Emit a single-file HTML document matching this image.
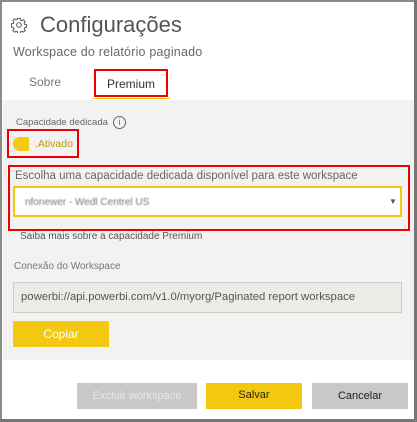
<!DOCTYPE html>
<html><head><meta charset="utf-8"><style>
*{margin:0;padding:0;box-sizing:border-box}
body{width:417px;height:422px;background:#fff;font-family:"Liberation Sans",sans-serif;position:relative;overflow:hidden}
.a{position:absolute;white-space:nowrap}
</style></head><body>
<div class="a" style="left:0;top:0;width:417px;height:2px;background:#8a8a8a"></div>
<div class="a" style="left:0;top:0;width:2px;height:422px;background:#8a8a8a"></div>
<div class="a" style="left:414px;top:0;width:3px;height:422px;background:#777"></div>
<div class="a" style="left:0;top:419px;width:417px;height:3px;background:#777"></div>

<svg class="a" style="left:11px;top:17px" width="16" height="16" viewBox="0 0 18 18"><g fill="none" stroke="#555" stroke-width="1.1"><circle cx="9" cy="9" r="2.6"/><path d="M7.6 1.5h2.8l.4 2.1 1.4.7 1.8-1.2 2 2-1.2 1.8.6 1.4 2.1.4v2.8l-2.1.4-.6 1.4 1.2 1.8-2 2-1.8-1.2-1.4.6-.4 2.1H7.6l-.4-2.1-1.4-.6-1.8 1.2-2-2 1.2-1.8-.6-1.4-2.1-.4V7.6l2.1-.4.6-1.4-1.2-1.8 2-2 1.8 1.2 1.4-.7z"/></g></svg>
<div class="a" style="left:40px;top:12px;font-size:22px;color:#555">Configurações</div>
<div class="a" style="left:13px;top:45px;font-size:12.5px;color:#666;letter-spacing:.2px">Workspace do relatório paginado</div>
<div class="a" style="left:29px;top:75px;font-size:12px;color:#777">Sobre</div>
<div class="a" style="left:94px;top:69px;width:74px;height:28px;border:2px solid #e00"></div>
<div class="a" style="left:107px;top:77px;font-size:12px;color:#333">Premium</div>
<div class="a" style="left:93px;top:98px;width:77px;height:1px;background:#f2c811"></div>

<div class="a" style="left:3px;top:100px;width:411px;height:260px;background:#f2f2f2"></div>
<div class="a" style="left:16px;top:117px;font-size:9.5px;color:#666">Capacidade dedicada</div>
<div class="a" style="left:113px;top:116px;width:13px;height:13px;border:1px solid #666;border-radius:50%;font-size:9px;color:#666;text-align:center;line-height:11px">i</div>
<div class="a" style="left:7px;top:129px;width:72px;height:29px;border:2px solid #e00"></div>
<div class="a" style="left:13px;top:137px;width:16px;height:14px;background:#f2c811;border-radius:7px 0 0 7px"></div>
<div class="a" style="left:35px;top:138px;font-size:10.5px;color:#b8960c">.Ativado</div>

<div class="a" style="left:8px;top:165px;width:402px;height:66px;border:2px solid #e00"></div>
<div class="a" style="left:15px;top:170px;font-size:11.5px;color:#666">Escolha uma capacidade dedicada disponível para este workspace</div>
<div class="a" style="left:13px;top:186px;width:389px;height:31px;border:2px solid #f2c811;background:#fff"></div>
<div class="a" style="left:25px;top:197px;font-size:10px;color:#777;filter:blur(.6px)">nfonewer - Wedl Centrel US</div>
<div class="a" style="left:389px;top:197px;font-size:8px;color:#555">▼</div>
<div class="a" style="left:12px;top:232px;width:83px;height:12px;background:#f0f6f6"></div>
<div class="a" style="left:20px;top:231px;font-size:10px;color:#555">Saiba mais sobre a capacidade Premium</div>

<div class="a" style="left:14px;top:261px;font-size:10px;color:#777">Conexão do Workspace</div>
<div class="a" style="left:13px;top:282px;width:389px;height:31px;background:#ecebe6;border:1px solid #ccc"></div>
<div class="a" style="left:21px;top:291px;font-size:11.3px;color:#555">powerbi://api.powerbi.com/v1.0/myorg/Paginated report workspace</div>
<div class="a" style="left:13px;top:321px;width:96px;height:26px;background:#f2c811;color:#fff;font-size:12px;text-align:center;line-height:26px">Copiar</div>

<div class="a" style="left:77px;top:383px;width:120px;height:26px;background:#c8c8c8;color:#e8e8e8;font-size:11px;text-align:center;line-height:26px">Excluir workspace</div>
<div class="a" style="left:206px;top:383px;width:96px;height:26px;background:#f2c811;color:#222;font-size:11px;text-align:center;line-height:24px">Salvar</div>
<div class="a" style="left:312px;top:383px;width:96px;height:26px;background:#c8c8c8;color:#222;font-size:11px;text-align:center;line-height:26px">Cancelar</div>
</body></html>
